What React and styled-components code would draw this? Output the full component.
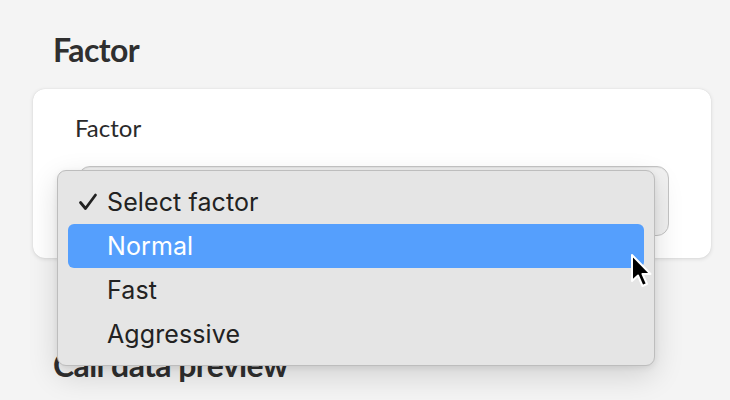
import React from "react";
import styled, { createGlobalStyle } from "styled-components";

const GlobalStyle = createGlobalStyle`
  html, body {
    margin: 0;
    padding: 0;
    background: #f4f4f4;
    font-family: Lato, "Open Sans", sans-serif;
    overflow: hidden;
  }
`;

const Page = styled.div`
  width: 730px;
  height: 400px;
  padding: 31px 20px 0 33px;
  box-sizing: border-box;
  position: relative;
`;

const Heading = styled.h2`
  margin: 0 0 ${(p) => p.$gap || 0}px 20px;
  font-family: Lato, sans-serif;
  font-weight: 700;
  font-size: 32px;
  line-height: 38px;
  color: #2f2f2f;
  letter-spacing: -0.6px;
`;

const Card = styled.div`
  width: 678px;
  height: 169px;
  box-sizing: border-box;
  background: #fff;
  border-radius: 12px;
  box-shadow: 0 1px 4px rgba(0, 0, 0, 0.12), 0 0 1px rgba(0, 0, 0, 0.12);
  padding: 24px 40px 0 42px;
  margin-bottom: 88px;
`;

const Label = styled.div`
  font-family: Lato, sans-serif;
  font-size: 24px;
  line-height: 30px;
  color: #2a2a2a;
  margin-bottom: 23px;
`;

const SelectBox = styled.div`
  position: relative;
  margin-left: 3px;
  width: 591px;
  height: 70px;
  box-sizing: border-box;
  background: #f1f1f1;
  border: 1px solid #c4c4c4;
  border-radius: 12px;
  box-shadow: inset 0 1px 1px rgba(0, 0, 0, 0.06);
`;

const Menu = styled.ul`
  position: absolute;
  left: -22px;
  top: 3px;
  width: 598px;
  height: 196px;
  box-sizing: border-box;
  margin: 0;
  padding: 9px 10px;
  list-style: none;
  background: #e5e5e5;
  border: 1px solid #bdbdbd;
  border-radius: 9px;
  box-shadow: 0 10px 30px rgba(0, 0, 0, 0.14), 0 2px 6px rgba(0, 0, 0, 0.08);
  z-index: 2;
`;

const Item = styled.li`
  display: flex;
  align-items: center;
  height: 44px;
  padding-left: 10px;
  border-radius: 6px;
  font-family: Inter, Roboto, sans-serif;
  font-size: 25px;
  letter-spacing: 0.1px;
  color: ${(p) => (p.$active ? "#fff" : "#222")};
  background: ${(p) => (p.$active ? "#559ffd" : "transparent")};
`;

const Check = styled.span`
  width: 29px;
  display: inline-flex;
  align-items: center;
`;

const Cursor = styled.svg`
  position: absolute;
  left: 551px;
  top: 86px;
  z-index: 3;
`;

const options = ["Select factor", "Normal", "Fast", "Aggressive"];

export default function App() {
  return (
    <>
      <GlobalStyle />
      <Page>
        <Heading $gap={20}>Factor</Heading>
        <Card>
          <Label>Factor</Label>
          <SelectBox>
            <Menu>
              {options.map((o, i) => (
                <Item key={o} $active={i === 1}>
                  <Check>
                    {i === 0 && (
                      <svg width="20" height="20" viewBox="0 0 20 20">
                        <path
                          d="M2.5 10.5 L7.5 16.5 L17.5 3"
                          fill="none"
                          stroke="#222"
                          strokeWidth="2.8"
                          strokeLinecap="round"
                          strokeLinejoin="round"
                        />
                      </svg>
                    )}
                  </Check>
                  {o}
                </Item>
              ))}
            </Menu>
            <Cursor width="24" height="36" viewBox="0 0 24 36">
              <path
                d="M2 2 L2 28 L8 22.5 L12.5 33 L17 31 L12.5 21 L20.5 21 Z"
                fill="#000"
                stroke="#fff"
                strokeWidth="2"
                strokeLinejoin="round"
              />
            </Cursor>
          </SelectBox>
        </Card>
        <Heading>Call data preview</Heading>
      </Page>
    </>
  );
}
